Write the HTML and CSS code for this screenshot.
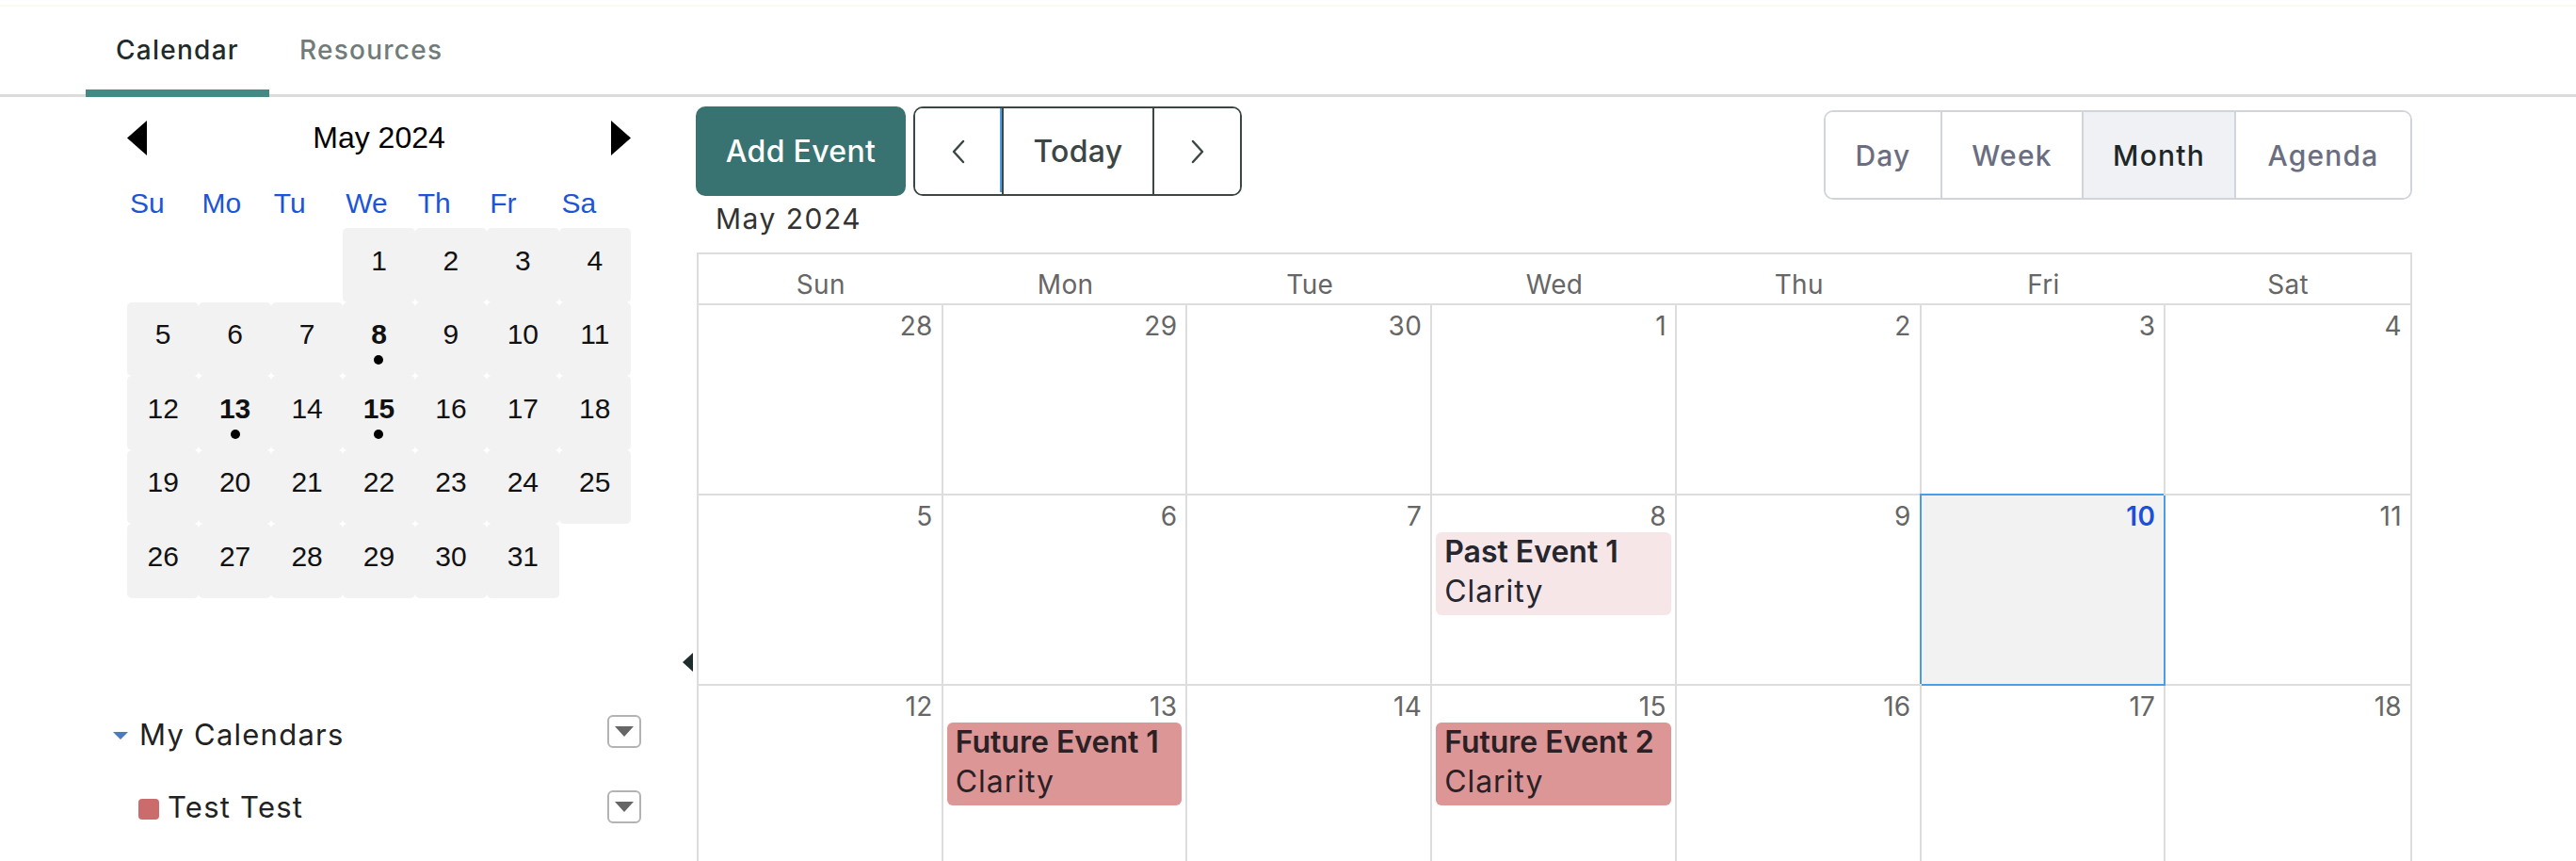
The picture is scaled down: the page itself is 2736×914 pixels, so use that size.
FILE: index.html
```html
<!DOCTYPE html>
<html lang="en">
<head>
<meta charset="utf-8">
<title>Calendar</title>
<link rel="stylesheet" href="styles.css">
</head>
<body>
<div class="topline"></div>
<nav class="tabs">
  <div class="tab active">Calendar</div>
  <div class="tab">Resources</div>
</nav>
<div class="layout">
  <aside class="sidebar">
    <div class="mini">
      <div class="mini-head">
        <svg class="mini-arrow" width="21" height="37" viewBox="0 0 21 37"><polygon points="21,0 21,37 0,18.5" fill="#000"/></svg>
        <span class="mini-title">May 2024</span>
        <svg class="mini-arrow" width="21" height="37" viewBox="0 0 21 37"><polygon points="0,0 0,37 21,18.5" fill="#000"/></svg>
      </div>
      <div class="mini-dows"><span>Su</span><span>Mo</span><span>Tu</span><span>We</span><span>Th</span><span>Fr</span><span>Sa</span></div>
      <div class="mini-grid">
        <span class="blank"></span><span class="blank"></span><span class="blank"></span>
        <span class="d">1</span><span class="d">2</span><span class="d">3</span><span class="d">4</span>
        <span class="d">5</span><span class="d">6</span><span class="d">7</span><span class="d ev">8</span><span class="d">9</span><span class="d">10</span><span class="d">11</span>
        <span class="d">12</span><span class="d ev">13</span><span class="d">14</span><span class="d ev">15</span><span class="d">16</span><span class="d">17</span><span class="d">18</span>
        <span class="d">19</span><span class="d">20</span><span class="d">21</span><span class="d">22</span><span class="d">23</span><span class="d">24</span><span class="d">25</span>
        <span class="d">26</span><span class="d">27</span><span class="d">28</span><span class="d">29</span><span class="d">30</span><span class="d">31</span><span class="blank"></span>
      </div>
    </div>
    <div class="cal-list">
      <div class="cal-row group">
        <svg class="caret" width="16" height="8" viewBox="0 0 16 8"><polygon points="0,0 16,0 8,8" fill="#4b7bbf"/></svg>
        <span class="cal-name">My Calendars</span>
        <span class="dd"><svg width="20" height="11" viewBox="0 0 20 11"><polygon points="0,0 20,0 10,11" fill="#666"/></svg></span>
      </div>
      <div class="cal-row">
        <span class="swatch"></span>
        <span class="cal-name">Test Test</span>
        <span class="dd"><svg width="20" height="11" viewBox="0 0 20 11"><polygon points="0,0 20,0 10,11" fill="#666"/></svg></span>
      </div>
    </div>
  </aside>
  <div class="splitter">
    <svg width="11" height="20" viewBox="0 0 11 20"><polygon points="11,0 11,20 0,10" fill="#1f2d2d"/></svg>
  </div>
  <main class="main">
    <div class="toolbar">
      <div class="tb-left">
        <button class="add">Add Event</button>
        <div class="nav">
          <button class="arrow prev"><svg width="20" height="30" viewBox="0 0 20 30"><polyline points="15,4 5,15 15,26" fill="none" stroke="#3c4645" stroke-width="2.4" stroke-linecap="round" stroke-linejoin="round"/></svg></button>
          <button class="today">Today</button>
          <button class="arrow next"><svg width="20" height="30" viewBox="0 0 20 30"><polyline points="5,4 15,15 5,26" fill="none" stroke="#3c4645" stroke-width="2.4" stroke-linecap="round" stroke-linejoin="round"/></svg></button>
        </div>
      </div>
      <div class="views">
        <button class="v-day">Day</button>
        <button class="v-week">Week</button>
        <button class="v-month on">Month</button>
        <button class="v-agenda">Agenda</button>
      </div>
    </div>
    <div class="title">May 2024</div>
    <div class="month">
      <div class="mhead"><div>Sun</div><div>Mon</div><div>Tue</div><div>Wed</div><div>Thu</div><div>Fri</div><div>Sat</div></div>
      <div class="week">
        <div class="cell"><div class="num">28</div></div>
        <div class="cell"><div class="num">29</div></div>
        <div class="cell"><div class="num">30</div></div>
        <div class="cell"><div class="num">1</div></div>
        <div class="cell"><div class="num">2</div></div>
        <div class="cell"><div class="num">3</div></div>
        <div class="cell"><div class="num">4</div></div>
      </div>
      <div class="week">
        <div class="cell"><div class="num">5</div></div>
        <div class="cell"><div class="num">6</div></div>
        <div class="cell"><div class="num">7</div></div>
        <div class="cell"><div class="num">8</div><div class="evt past"><div class="evt-title">Past Event 1</div><div class="evt-sub">Clarity</div></div></div>
        <div class="cell"><div class="num">9</div></div>
        <div class="cell today"><div class="num">10</div></div>
        <div class="cell"><div class="num">11</div></div>
      </div>
      <div class="week">
        <div class="cell"><div class="num">12</div></div>
        <div class="cell"><div class="num">13</div><div class="evt future"><div class="evt-title">Future Event 1</div><div class="evt-sub">Clarity</div></div></div>
        <div class="cell"><div class="num">14</div></div>
        <div class="cell"><div class="num">15</div><div class="evt future"><div class="evt-title">Future Event 2</div><div class="evt-sub">Clarity</div></div></div>
        <div class="cell"><div class="num">16</div></div>
        <div class="cell"><div class="num">17</div></div>
        <div class="cell"><div class="num">18</div></div>
      </div>
    </div>
  </main>
</div>
</body>
</html>
```

FILE: styles.css
```css
html, body {
  margin: 0;
  padding: 0;
  background: #ffffff;
}
body {
  width: 2736px;
  height: 914px;
  overflow: hidden;
  font-family: "Inter", "Open Sans", sans-serif;
  letter-spacing: 0.02em;
}
button {
  font-family: inherit;
  letter-spacing: inherit;
  cursor: pointer;
}

.topline {
  height: 2px;
  margin-top: 5px;
  background: #fafaee;
}

/* Tabs */
.tabs {
  display: flex;
  align-items: flex-start;
  height: 93px;
  padding-left: 91px;
  border-bottom: 3px solid #dcdcdc;
}
.tab {
  padding: 26px 32px 22px;
  line-height: 40px;
  font-size: 28px;
  font-weight: 500;
  letter-spacing: 0.045em;
  color: #707b7a;
  border-bottom: 8px solid transparent;
  margin-bottom: -3px;
}
.tab.active {
  color: #1f2b2b;
  border-bottom-color: #438a87;
}

/* Layout */
.layout {
  display: flex;
  align-items: flex-start;
}
.sidebar {
  width: 720px;
  box-sizing: border-box;
  padding-left: 120px;
}

/* Mini calendar */
.mini {
  width: 535px;
  margin-left: 15px;
  margin-top: 21px;
  font-family: "Liberation Sans", Arial, sans-serif;
  letter-spacing: 0;
}
.mini-head {
  display: flex;
  justify-content: space-between;
  align-items: center;
  height: 44px;
}
.mini-arrow { display: block; }
.mini-title {
  font-size: 32px;
  color: #000;
}
.mini-dows {
  display: grid;
  grid-template-columns: repeat(7, 1fr);
  margin-top: 28px;
  line-height: 40px;
  font-size: 30px;
  color: #1c55d6;
}
.mini-dows span { padding-left: 3px; }
.mini-grid {
  margin-top: 6px;
  display: grid;
  grid-template-columns: repeat(7, 1fr);
  grid-auto-rows: 78.5px;
}
.d {
  position: relative;
  display: flex;
  align-items: center;
  justify-content: center;
  box-sizing: border-box;
  padding-bottom: 9px;
  background: #f2f2f2;
  border-radius: 5px;
  font-size: 30px;
  color: #111;
}
.d.ev { font-weight: 700; }
.d.ev::after {
  content: "";
  position: absolute;
  left: 50%;
  bottom: 12px;
  width: 10px;
  height: 10px;
  margin-left: -5px;
  border-radius: 50%;
  background: #000;
}

/* Calendar list */
.cal-list {
  width: 561px;
  margin-top: 124px;
}
.cal-row {
  display: flex;
  align-items: center;
  height: 36px;
}
.cal-row + .cal-row { margin-top: 44px; }
.caret {
  display: block;
  margin-right: 12px;
}
.cal-name {
  flex: 1;
  font-size: 31px;
  letter-spacing: 0.04em;
  color: #222;
  line-height: 40px;
}
.group .caret { margin-top: 8px; }
.group .cal-name { padding-top: 6px; }
.swatch {
  width: 22px;
  height: 22px;
  margin-left: 27px;
  margin-right: 9px;
  margin-top: 4px;
  border-radius: 4px;
  background: #cc6b6b;
}
.dd {
  width: 36px;
  height: 35px;
  box-sizing: border-box;
  border: 2px solid #b3b3b3;
  border-radius: 6px;
  display: flex;
  align-items: center;
  justify-content: center;
}
.dd svg { display: block; }

/* Splitter */
.splitter { width: 20px; }
.splitter svg {
  display: block;
  margin: 590px 0 0 5px;
}

/* Main */
.main { width: 1822px; }
.toolbar {
  display: flex;
  justify-content: space-between;
  align-items: flex-start;
  margin-top: 10px;
}
.tb-left {
  display: flex;
  gap: 8px;
  margin-left: -1px;
}
.add {
  width: 223px;
  height: 95px;
  border: 0;
  border-radius: 10px;
  background: #387371;
  color: #fff;
  font-size: 32px;
  font-weight: 500;
}
.nav {
  display: flex;
  height: 95px;
  box-sizing: border-box;
  border: 2px solid #3c4645;
  border-radius: 10px;
  overflow: hidden;
}
.nav button {
  display: flex;
  align-items: center;
  justify-content: center;
  padding: 0;
  border: 0;
  background: #fff;
  color: #3c4645;
}
.nav .prev { width: 92px; }
.nav .next { width: 91px; }
.nav .today {
  width: 162px;
  border-left: 2px solid #3c4645;
  border-right: 2px solid #3c4645;
  font-size: 32px;
  font-weight: 500;
}
.views {
  display: flex;
  height: 95px;
  margin-top: 4px;
  box-sizing: border-box;
  border: 2px solid #d1d5db;
  border-radius: 10px;
  overflow: hidden;
}
.views button {
  padding: 0;
  border: 0;
  border-left: 2px solid #d1d5db;
  background: #fff;
  color: #6b6e80;
  font-size: 30px;
  font-weight: 500;
  letter-spacing: 0.04em;
}
.views button:first-child { border-left: 0; }
.views .v-day { width: 122px; }
.views .v-week { width: 150px; }
.views .v-month { width: 162px; }
.views .v-agenda { width: 187px; }
.views .on {
  background: #f0f1f5;
  color: #1d2727;
}

.title {
  padding-left: 20px;
  font-size: 30px;
  line-height: 40px;
  letter-spacing: 0.05em;
  color: #333;
}

/* Month grid */
.month {
  margin-top: 16px;
  border: 2px solid #dddddd;
  border-bottom: 0;
}
.mhead {
  display: grid;
  grid-template-columns: repeat(7, 1fr);
  height: 52px;
  border-bottom: 2px solid #dddddd;
}
.mhead div {
  padding-top: 12px;
  line-height: 40px;
  text-align: center;
  font-size: 28px;
  color: #666;
}
.week {
  display: grid;
  grid-template-columns: repeat(7, 1fr);
}
.cell {
  min-width: 0;
  height: 200px;
  border-right: 2px solid #dddddd;
  border-bottom: 2px solid #dddddd;
}
.cell:last-child { border-right: 0; }
.num {
  padding: 5px 9px 0 0;
  line-height: 34px;
  text-align: right;
  font-size: 28px;
  color: #666;
}
.today {
  background: #f2f2f2;
  border-right: 2px solid #4a9ee6;
  border-bottom-color: #4a9ee6;
  box-shadow: -2px -2px 0 #4a9ee6;
}
.today .num {
  color: #1e4fd8;
  font-weight: 600;
}
.evt {
  margin: 0 4px;
  padding: 0 9px 4px;
  border-radius: 6px;
  white-space: nowrap;
  overflow: hidden;
}
.evt-title {
  font-size: 32px;
  font-weight: 600;
  line-height: 42px;
  letter-spacing: 0;
}
.evt-sub {
  font-size: 32px;
  font-weight: 400;
  line-height: 42px;
  letter-spacing: 0.03em;
}
.evt.past {
  background: #f7e6e8;
  color: #26262f;
}
.evt.future {
  background: #dc9696;
  color: #2a2025;
}
```
